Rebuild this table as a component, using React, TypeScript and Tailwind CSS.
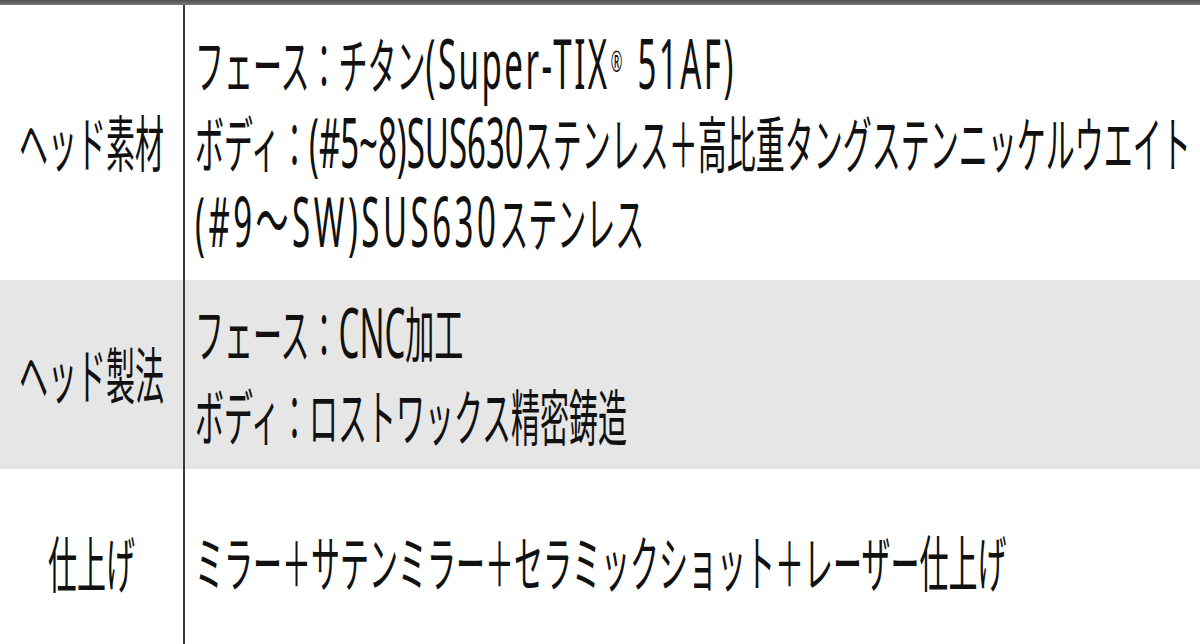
import React from 'react';

type Line = React.ReactNode;

interface SpecRowProps {
  label: string;
  lines: Line[];
  height: string;
  shaded?: boolean;
  leading: string;
}

// tall, narrow glyphs as in the source picture
const Stretch: React.FC<{ children: React.ReactNode }> = ({ children }) => (
  <span className="inline-block leading-none scale-y-[2.1] origin-center whitespace-nowrap">{children}</span>
);

const Latin: React.FC<{ children: React.ReactNode; className?: string }> = ({ children, className = '' }) => (
  <span className={`text-[33px] ${className}`}>{children}</span>
);

const SpecRow: React.FC<SpecRowProps> = ({ label, lines, height, shaded, leading }) => {
  return (
    <div className={`flex ${height} ${shaded ? 'bg-[#e6e6e6]' : 'bg-white'}`}>
      <div className="w-[185px] shrink-0 border-r-2 border-[#3a3a3a] flex items-center justify-center">
        <Stretch>{label}</Stretch>
      </div>
      <div className="flex-1 pl-[10px] flex flex-col justify-center">
        {lines.map((line, idx) => (
          <div key={idx} className={leading}>
            <Stretch>{line}</Stretch>
          </div>
        ))}
      </div>
    </div>
  );
};

const App: React.FC = () => {
  return (
    <div className="w-[1200px] h-[644px] overflow-hidden bg-white text-[#111] text-[29px] font-['Noto_Sans','Noto_Sans_CJK_JP',sans-serif]">
      <div className="h-[5px] bg-linear-to-b from-[#4f4f4f] to-[#7a7a7a]" />

      {/* ヘッド素材 */}
      <SpecRow
        label="ヘッド素材"
        height="h-[275px]"
        leading="leading-[79px]"
        lines={[
          <>
            フェース：チタン<Latin className="tracking-[2.5px]">(Super-TIX</Latin>
            <sup className="text-[14px] ml-[1px] mr-[4px] relative -top-[8px]">®</sup>
            <Latin className="tracking-[2.5px]"> 51AF)</Latin>
          </>,
          <>
            ボディ：<Latin>(#5~8)SUS630</Latin>ステンレス＋高比重タングステンニッケルウエイト
          </>,
          <>
            <Latin className="tracking-[3.5px]">(#9～SW)SUS630</Latin>ステンレス
          </>,
        ]}
      />

      {/* ヘッド製法 */}
      <SpecRow
        label="ヘッド製法"
        height="h-[189px]"
        shaded
        leading="leading-[84px]"
        lines={[
          <>
            フェース：<Latin>CNC</Latin>加工
          </>,
          <>ボディ：ロストワックス精密鋳造</>,
        ]}
      />

      {/* 仕上げ */}
      <SpecRow
        label="仕上げ"
        height="h-[188px]"
        leading="leading-[80px]"
        lines={[<>ミラー＋サテンミラー＋セラミックショット＋レーザー仕上げ</>]}
      />
    </div>
  );
};

export default App;
